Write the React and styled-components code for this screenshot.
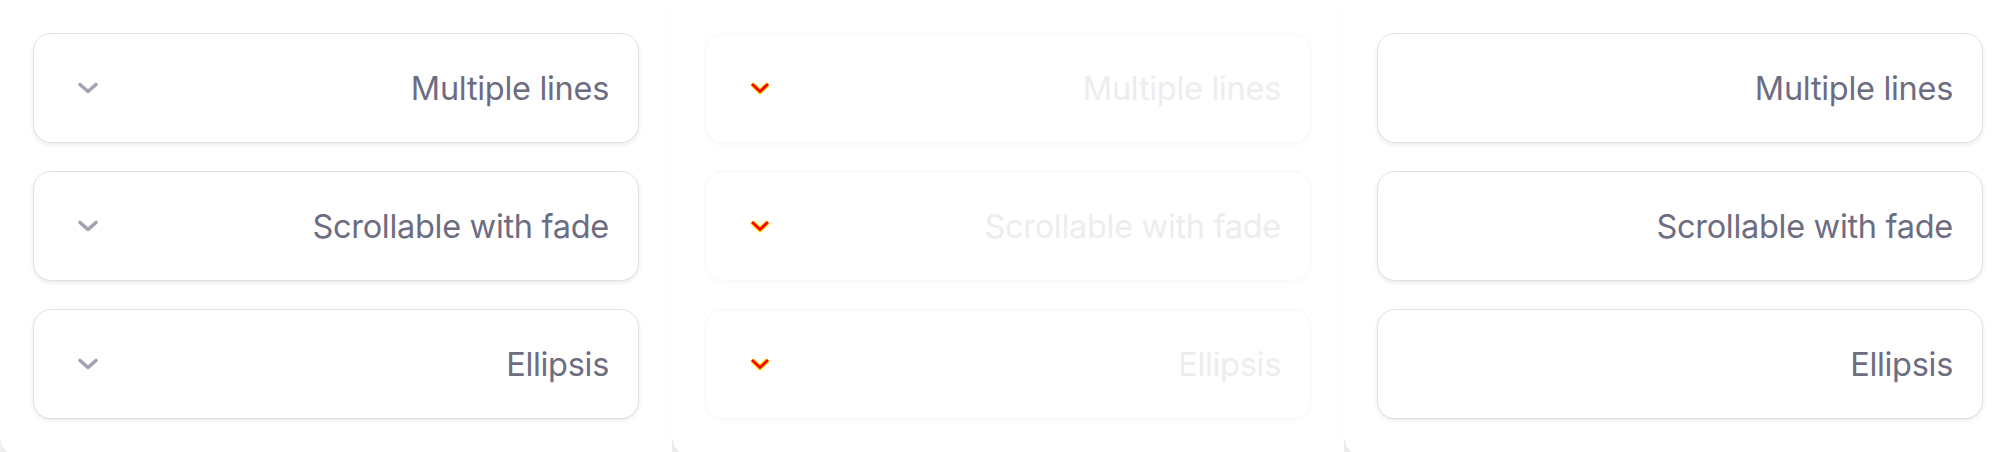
import React from 'react';
import styled, { createGlobalStyle } from 'styled-components';

const GlobalStyle = createGlobalStyle`
  html, body {
    margin: 0;
    padding: 0;
    background: #ffffff;
    overflow: hidden;
  }
  body {
    font-family: Inter, "Noto Sans", sans-serif;
  }
`;

const Board = styled.div`
  display: flex;
  width: 2016px;
  height: 452px;
  background: #f0f0f1;
`;

const Panel = styled.section`
  width: 672px;
  height: 458px;
  flex-shrink: 0;
  box-sizing: border-box;
  padding: 33px;
  display: flex;
  flex-direction: column;
  gap: 28px;
  background: #ffffff;
  border-radius: 0 0 0 22px;
  box-shadow: 0 4px 6px -2px rgba(0, 0, 0, 0.05);
  position: relative;
  z-index: ${(p) => p.$layer};
`;

const Card = styled.div`
  height: 110px;
  box-sizing: border-box;
  display: flex;
  align-items: center;
  padding: 0 29px 0 42px;
  background: #ffffff;
  border: 1.5px solid ${(p) => (p.$faded ? '#f7f7f8' : '#e1e1e5')};
  border-radius: 18px;
  box-shadow: ${(p) =>
    p.$faded ? '0 2px 6px rgba(0, 0, 0, 0.025)' : '0 2px 4px rgba(0, 0, 0, 0.08)'};
`;

const Label = styled.span`
  margin-left: auto;
  font-size: 32.5px;
  font-weight: 400;
  letter-spacing: -0.3px;
  color: ${(p) => (p.$faded ? '#ededef' : '#6d6d82')};
  white-space: nowrap;
`;

const ChevronBox = styled.svg`
  display: block;
  width: 24px;
  height: 14px;
  flex-shrink: 0;
`;

const Chevron = ({ alert }) => (
  <ChevronBox viewBox="0 0 24 14">
    {alert ? (
      <>
        <polyline points="4,3 12,10.5 20,3" fill="none" stroke="#ffee00" strokeWidth="5" strokeLinejoin="miter" />
        <polyline points="4,3 12,10.5 20,3" fill="none" stroke="#ff0000" strokeWidth="3" strokeLinejoin="miter" />
      </>
    ) : (
      <polyline
        points="4,3.5 12,10.5 20,3.5"
        fill="none"
        stroke="#a2a2b0"
        strokeWidth="3.6"
        strokeLinecap="round"
        strokeLinejoin="round"
      />
    )}
  </ChevronBox>
);

const items = ['Multiple lines', 'Scrollable with fade', 'Ellipsis'];

const Column = ({ variant, layer }) => (
  <Panel $layer={layer}>
    {items.map((text) => (
      <Card key={text} $faded={variant === 'faded'}>
        {variant !== 'plain' && <Chevron alert={variant === 'faded'} />}
        <Label $faded={variant === 'faded'}>{text}</Label>
      </Card>
    ))}
  </Panel>
);

export default function App() {
  return (
    <>
      <GlobalStyle />
      <Board>
        <Column variant="default" layer={1} />
        <Column variant="faded" layer={2} />
        <Column variant="plain" layer={3} />
      </Board>
    </>
  );
}
